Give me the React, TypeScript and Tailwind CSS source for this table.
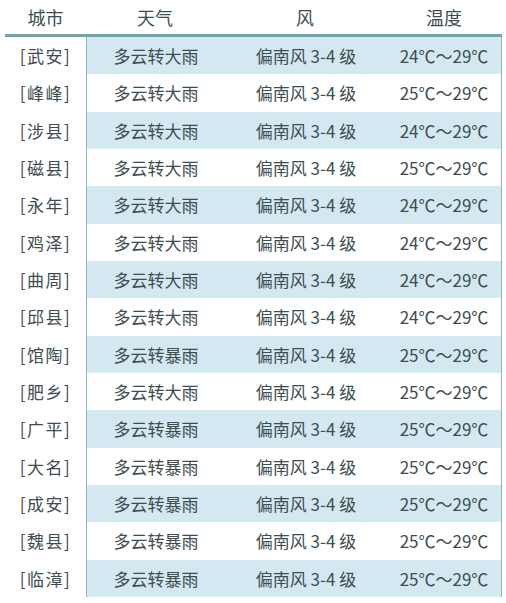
import React from 'react';

type Row = { city: string; weather: string; wind: string; temp: string };

const rows: Row[] = [
  { city: '武安', weather: '多云转大雨', wind: '偏南风 3-4 级', temp: '24℃～29℃' },
  { city: '峰峰', weather: '多云转大雨', wind: '偏南风 3-4 级', temp: '25℃～29℃' },
  { city: '涉县', weather: '多云转大雨', wind: '偏南风 3-4 级', temp: '24℃～29℃' },
  { city: '磁县', weather: '多云转大雨', wind: '偏南风 3-4 级', temp: '25℃～29℃' },
  { city: '永年', weather: '多云转大雨', wind: '偏南风 3-4 级', temp: '24℃～29℃' },
  { city: '鸡泽', weather: '多云转大雨', wind: '偏南风 3-4 级', temp: '24℃～29℃' },
  { city: '曲周', weather: '多云转大雨', wind: '偏南风 3-4 级', temp: '24℃～29℃' },
  { city: '邱县', weather: '多云转大雨', wind: '偏南风 3-4 级', temp: '24℃～29℃' },
  { city: '馆陶', weather: '多云转暴雨', wind: '偏南风 3-4 级', temp: '25℃～29℃' },
  { city: '肥乡', weather: '多云转大雨', wind: '偏南风 3-4 级', temp: '25℃～29℃' },
  { city: '广平', weather: '多云转暴雨', wind: '偏南风 3-4 级', temp: '25℃～29℃' },
  { city: '大名', weather: '多云转暴雨', wind: '偏南风 3-4 级', temp: '25℃～29℃' },
  { city: '成安', weather: '多云转暴雨', wind: '偏南风 3-4 级', temp: '25℃～29℃' },
  { city: '魏县', weather: '多云转暴雨', wind: '偏南风 3-4 级', temp: '25℃～29℃' },
  { city: '临漳', weather: '多云转暴雨', wind: '偏南风 3-4 级', temp: '25℃～29℃' },
];

const font = { fontFamily: '"Noto Sans CJK SC", "Noto Sans", sans-serif' };

export default function App() {
  return (
    <div className="w-[506px] h-[603px] bg-white text-[#3d4d50] overflow-hidden" style={font}>
      {/* Header */}
      <div className="flex h-[34px] items-center pl-[5px] text-[18px] pt-[1px]">
        <div className="w-[81px] text-center">城市</div>
        <div className="w-[138px] text-center">天气</div>
        <div className="w-[162px] text-center">风</div>
        <div className="w-[116px] text-center">温度</div>
      </div>
      <div className="ml-[5px] w-[497px] h-[3px] bg-[#6fa3b0]" />

      {/* Body */}
      <div className="flex pl-[5px]">
        <div className="w-[81px] flex flex-col">
          {rows.map((r, i) => (
            <div key={i} className="h-[37.33px] flex items-center justify-center text-[17px] tracking-[1.5px]">
              [{r.city}]
            </div>
          ))}
        </div>
        <div className="w-[416px] border-l border-r border-[#8cb7c2] flex flex-col">
          {rows.map((r, i) => (
            <div
              key={i}
              className={`h-[37.33px] flex items-center text-[17px] ${i % 2 === 0 ? 'bg-[#d3e8f0]' : 'bg-white'}`}
            >
              <div className="w-[138px] text-center">{r.weather}</div>
              <div className="w-[162px] text-center">{r.wind}</div>
              <div className="w-[114px] text-center">{r.temp}</div>
            </div>
          ))}
        </div>
      </div>
    </div>
  );
}
